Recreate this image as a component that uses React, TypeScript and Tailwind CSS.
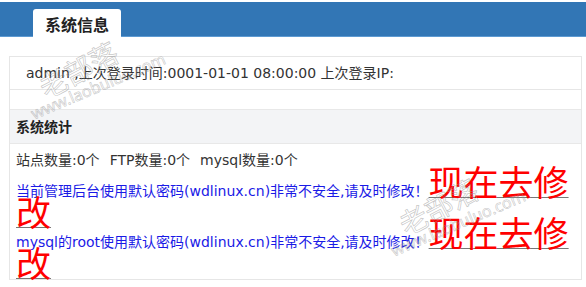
import React from "react";

function Watermark({ x, y }: { x: number; y: number }) {
  return (
    <>
      <div
        className="pointer-events-none absolute w-[200px] h-[40px] flex items-center justify-center rotate-[-28deg] text-[28px] leading-none text-transparent [-webkit-text-stroke:0.7px_rgba(150,150,150,0.55)] font-['Noto_Sans_CJK_SC',sans-serif]"
        style={{ left: x - 22, top: y + 49 }}
      >
        老部落
      </div>
      <div
        className="pointer-events-none absolute w-[200px] h-[40px] flex items-center justify-center rotate-[-23deg] text-[16px] leading-none text-transparent [-webkit-text-stroke:0.6px_rgba(150,150,150,0.55)] font-['Noto_Sans',sans-serif]"
        style={{ left: x - 2, top: y + 66 }}
      >
        www.laobuluo.com
      </div>
    </>
  );
}

export default function App() {
  return (
    <div className="relative w-[586px] h-[287px] overflow-hidden bg-white text-[14px] text-[#333] font-['DejaVu_Sans','Noto_Sans_CJK_SC',sans-serif]">
      <div className="pt-[2px]">
        <div className="h-[35px] bg-[#3276b5] border-b border-[#5d9ad2] flex items-end pl-[33px]">
          <div className="h-[28px] -mb-px bg-white rounded-t-[3px] px-[12px] text-[16px] font-bold text-[#222] leading-[28px] pt-px font-['Noto_Sans_CJK_SC',sans-serif]">
            系统信息
          </div>
        </div>
      </div>

      <div className="ml-[9px] mt-[19px] w-[573px] border border-[#e6e6e6]">
        <div className="h-[33px] border-b border-[#e6e6e6] flex items-center pl-[16px]">
          admin ,上次登录时间:0001-01-01 08:00:00 上次登录IP:
        </div>
        <div className="h-[19px]" />
        <div className="h-[33px] box-content border-y border-[#e8e8e8] bg-[#f3f4f6] flex items-center pl-[6px] font-bold text-[#222] font-['Noto_Sans_CJK_SC',sans-serif]">
          系统统计
        </div>
        <div className="pl-[6px] pt-[8px]">
          <div className="leading-[17px]">
            <span>站点数量:0个</span>
            <span className="ml-[10px]">FTP数量:0个</span>
            <span className="ml-[10px]">mysql数量:0个</span>
          </div>
          <div className="leading-[15px] text-[#1a1ae6]">
            当前管理后台使用默认密码(wdlinux.cn)非常不安全,请及时修改！
            <a className="underline decoration-[#777] decoration-1">
              <span className="text-[35px] leading-[30px] text-[#ff0000]">现在去修改</span>
            </a>
          </div>
          <div className="-mt-[9px] -mb-px leading-[15px] text-[#1a1ae6]">
            mysql的root使用默认密码(wdlinux.cn)非常不安全,请及时修改！
            <a className="underline decoration-[#777] decoration-1">
              <span className="text-[35px] leading-[30px] text-[#ff0000]">现在去修改</span>
            </a>
          </div>
        </div>
      </div>

      <Watermark x={0} y={0} />
      <Watermark x={360} y={137} />
    </div>
  );
}
